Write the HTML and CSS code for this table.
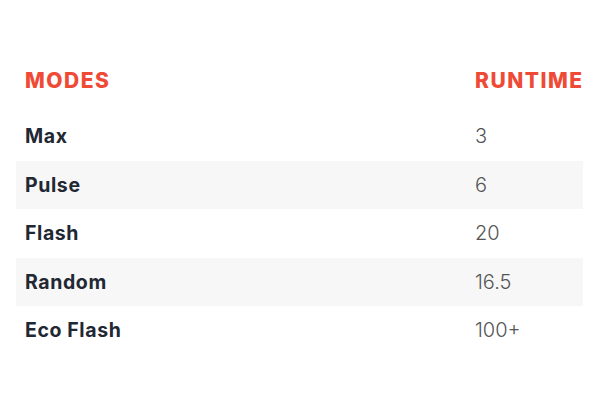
FILE: index.html
```html
<!DOCTYPE html>
<html>
<head>
<meta charset="utf-8">
<link rel="stylesheet" href="styles.css">
</head>
<body>
<div class="wrap">
  <table class="modes">
    <thead>
      <tr><th class="c1">MODES</th><th class="c2">RUNTIME</th></tr>
    </thead>
    <tbody>
      <tr><td class="name">Max</td><td class="val">3</td></tr>
      <tr class="alt"><td class="name">Pulse</td><td class="val">6</td></tr>
      <tr><td class="name">Flash</td><td class="val">20</td></tr>
      <tr class="alt"><td class="name">Random</td><td class="val">16.5</td></tr>
      <tr><td class="name">Eco Flash</td><td class="val">100+</td></tr>
    </tbody>
  </table>
</div>
</body>
</html>
```
FILE: styles.css
```css
html, body { margin: 0; padding: 0; background: #fff; }
body { font-family: Inter, "Liberation Sans", sans-serif; }
.wrap { padding: 48px 17px 0 16px; }
.modes { width: 567px; border-collapse: collapse; table-layout: fixed; }
.modes th {
  height: 64px;
  text-align: left;
  padding: 0 0 0 9px;
  color: #ef4a36;
  font-size: 21px;
  font-weight: 800;
  letter-spacing: 1.5px;
  vertical-align: middle;
  white-space: nowrap;
}
.modes th.c1 { width: 441px; }
.modes td { height: 48.5px; padding: 0 0 0 9px; vertical-align: middle; }
.modes tr.alt td { background: #f7f7f7; }
.name { font-size: 19.5px; font-weight: 700; color: #1f2833; letter-spacing: 0.6px; }
.val { font-size: 20px; font-weight: 300; color: #555; }
```
